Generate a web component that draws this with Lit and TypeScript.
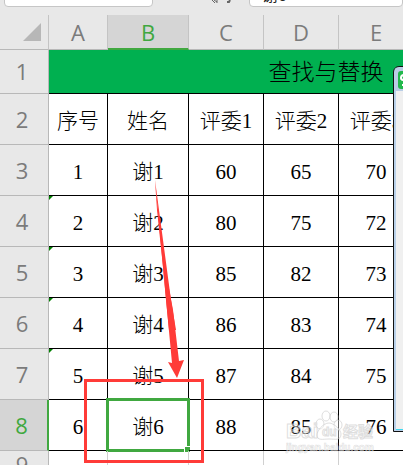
import { LitElement, html, svg, css, nothing } from "lit";
import { customElement } from "lit/decorators.js";
import { classMap } from "lit/directives/class-map.js";

const COLUMNS = ["A", "B", "C", "D", "E", "F", "G", "H"];
const ROWS: string[][] = [
  ["序号", "姓名", "评委1", "评委2", "评委3", "", "", ""],
  ["1", "谢1", "60", "65", "70", "", "", ""],
  ["2", "谢2", "80", "75", "72", "", "", ""],
  ["3", "谢3", "85", "82", "73", "", "", ""],
  ["4", "谢4", "86", "83", "74", "", "", ""],
  ["5", "谢5", "87", "84", "75", "", "", ""],
  ["6", "谢6", "88", "85", "76", "", "", ""],
];

@customElement("sheet-toolbar")
class SheetToolbar extends LitElement {
  static styles = css`
    :host {
      display: flex;
      align-items: flex-end;
      height: 15px;
      box-sizing: border-box;
      padding: 0 0 8px 4px;
      overflow: hidden;
      background: #e8e8e8;
    }
    input {
      box-sizing: border-box;
      height: 32px;
      border: 1px solid #c6c6c6;
      border-radius: 4px;
      background: #fff;
      color: #222;
      font: 16px/20px "Liberation Sans", "Noto Sans CJK SC", sans-serif;
      padding: 8px 12px 2px;
      outline: none;
      flex: none;
    }
    .name {
      width: 149px;
      padding-right: 24px;
      text-align: center;
    }
    .formula {
      flex: 1;
      min-width: 0;
    }
    .tools {
      width: 96px;
      box-sizing: border-box;
      padding-left: 56px;
      height: 10px;
      flex: none;
    }
    svg {
      display: block;
    }
  `;
  render() {
    return html`
      <input class="name" aria-label="Name box" value="B8" />
      <div class="tools">
        <svg width="32" height="10" fill="none" stroke="#666" stroke-width="1">
          <path d="M3 3L6 6M5 3L8 5M8 2V6" />
          <path d="M18 5H20L21 3" stroke-width="2" />
        </svg>
      </div>
      <input class="formula" aria-label="Formula" value="谢6" />
    `;
  }
}

@customElement("sheet-grid")
class SheetGrid extends LitElement {
  static styles = css`
    :host {
      display: block;
    }
    table {
      table-layout: fixed;
      width: 604px;
      border-collapse: separate;
      border-spacing: 0;
      background: #fff;
    }
    .w-head { width: 49px; }
    .w-a { width: 59px; }
    .w-b { width: 81px; }
    .w-n { width: 75px; }
    .w-h { width: 40px; }
    th {
      box-sizing: border-box;
      padding: 0;
      font: 22px/24px "Open Sans", "Noto Sans", sans-serif;
      color: #7b7b7b;
      background: #e8e8e8;
      border-right: 1px solid #b8b8b8;
      border-bottom: 1px solid #b8b8b8;
    }
    thead th {
      height: 35px;
      border-right-color: #c4c4c4;
    }
    .corner svg {
      display: block;
      margin: 0 7px 0 auto;
    }
    tbody th {
      height: 51px;
      padding-right: 4px;
      padding-bottom: 1px;
    }
    tbody .first th {
      height: 44px;
    }
    tbody .blank th {
      height: 28px;
    }
    th.on {
      background: #d5d5d5;
      color: #40a840;
    }
    thead th.on {
      border-bottom: 2px solid #40a840;
    }
    tbody th.on {
      border-right: 2px solid #40a840;
    }
    td {
      box-sizing: border-box;
      padding: 3px 0 0;
      text-align: center;
      white-space: nowrap;
      font: 300 21px/24px "Liberation Serif", "Noto Sans CJK SC", serif;
      color: #000;
      border-right: 1px solid #000;
      border-bottom: 1px solid #000;
      position: relative;
    }
    td.title {
      background: #00b050;
      font-size: 23px;
    }
    .blank td {
      border-color: #d0d0d0;
    }
    .flag {
      position: absolute;
      left: 0;
      top: 0;
      border: 2px solid #008000;
      border-right-color: transparent;
      border-bottom-color: transparent;
    }
    .selection {
      position: absolute;
      inset: -2px;
      border: 3px solid #40a840;
    }
    .handle {
      position: absolute;
      right: -4px;
      bottom: -4px;
      width: 5px;
      height: 5px;
      border: 1px solid #fff;
      background: #40a840;
    }
  `;
  private cell(text: string, r: number, c: number) {
    const selected = r === 6 && c === 1;
    return html`<td>
      ${c === 0 && r >= 2 && r < 6 ? html`<span class="flag"></span>` : nothing}${text}${selected
        ? html`<span class="selection"><span class="handle"></span></span>`
        : nothing}
    </td>`;
  }
  render() {
    return html`
      <table>
        <colgroup>
          <col class="w-head" />
          <col class="w-a" />
          <col class="w-b" />
          ${COLUMNS.slice(2, 7).map(() => html`<col class="w-n" />`)}
          <col class="w-h" />
        </colgroup>
        <thead>
          <tr>
            <th class="corner">
              <svg width="18" height="18"><path d="M18 0V18H0Z" fill="#b7b7b7" /></svg>
            </th>
            ${COLUMNS.map((c) => html`<th scope="col" class=${classMap({ on: c === "B" })}>${c}</th>`)}
          </tr>
        </thead>
        <tbody>
          <tr class="first">
            <th scope="row">1</th>
            <td class="title" colspan="8">查找与替换</td>
          </tr>
          ${ROWS.map(
            (row, r) => html`<tr>
              <th scope="row" class=${classMap({ on: r === 6 })}>${r + 2}</th>
              ${row.map((t, c) => this.cell(t, r, c))}
            </tr>`
          )}
          <tr class="blank">
            <th scope="row">9</th>
            ${COLUMNS.map(() => html`<td></td>`)}
          </tr>
        </tbody>
      </table>
    `;
  }
}

@customElement("app-root")
class AppRoot extends LitElement {
  static styles = css`
    :host {
      display: block;
      position: relative;
      height: 100vh;
      overflow: hidden;
      background: #fff;
    }
    .dialog {
      position: absolute;
      left: 393px;
      right: -200px;
      top: 66px;
      height: 366px;
      box-sizing: border-box;
      border: 1px solid #111;
      border-radius: 6px 0 0 0;
      background: #b9d1ea;
      padding: 1px 0 1px 1px;
      overflow: hidden;
    }
    .bar {
      height: 23px;
      padding: 3px 0 0 3px;
      box-sizing: border-box;
      background: #b9cde6;
    }
    .body {
      height: 338px;
      margin-left: 1px;
      background: #f0f0f0;
      border-bottom: 1px solid #3fd8f0;
    }
    .overlay {
      position: absolute;
      left: 0;
      top: 0;
      pointer-events: none;
    }
    .mark {
      font-family: "Liberation Sans", "Noto Sans CJK SC", sans-serif;
      font-weight: 700;
    }
  `;
  render() {
    return html`
      <sheet-toolbar></sheet-toolbar>
      <sheet-grid></sheet-grid>
      <svg class="overlay" width="403" height="465">
        ${svg`
          <g class="mark" fill="#fff" fill-opacity="0.4" stroke="#c8c8c8" stroke-opacity="0.6" stroke-width="1">
            <text x="286" y="438" font-size="21">Bai</text>
            <text x="343" y="437" font-size="15">经验</text>
            <text x="286" y="451" font-size="10" stroke-width="0.6">jingyan.baidu.com</text>
            <ellipse cx="320" cy="424" rx="4" ry="5" />
            <ellipse cx="326" cy="416" rx="4" ry="5" />
            <ellipse cx="334" cy="417" rx="4" ry="5" />
            <ellipse cx="338" cy="425" rx="4" ry="5" />
            <path d="M329 423C323 423 317 431 317 435C317 441 323 439 329 439S341 441 341 434C341 430 334 423 329 423Z" />
            <text x="322" y="436" font-size="12">du</text>
          </g>
          <path d="M155 180L157 210L163 267L167 310L172 363L168 362L177 378L184 360L179 361L173 310L165 267L158 210Z" fill="#ff3b38" />
          <path d="M155 180L166 300L169 330L176 330L171 300Z" fill="#ff3b38" />
          <rect x="85.5" y="380.5" width="117" height="81" fill="none" stroke="#ff3b38" stroke-width="3" />
        `}
      </svg>
      <section class="dialog" aria-label="查找">
        <div class="bar">
          <svg width="18" height="18">
            <rect width="18" height="18" rx="3" fill="#22b84c" />
            <path d="M13 4H6Q3 4 3 7Q3 9 6 9H11Q14 9 14 11Q14 14 11 14H4" fill="none" stroke="#fff" stroke-width="2" />
          </svg>
        </div>
        <div class="body"></div>
      </section>
    `;
  }
}
